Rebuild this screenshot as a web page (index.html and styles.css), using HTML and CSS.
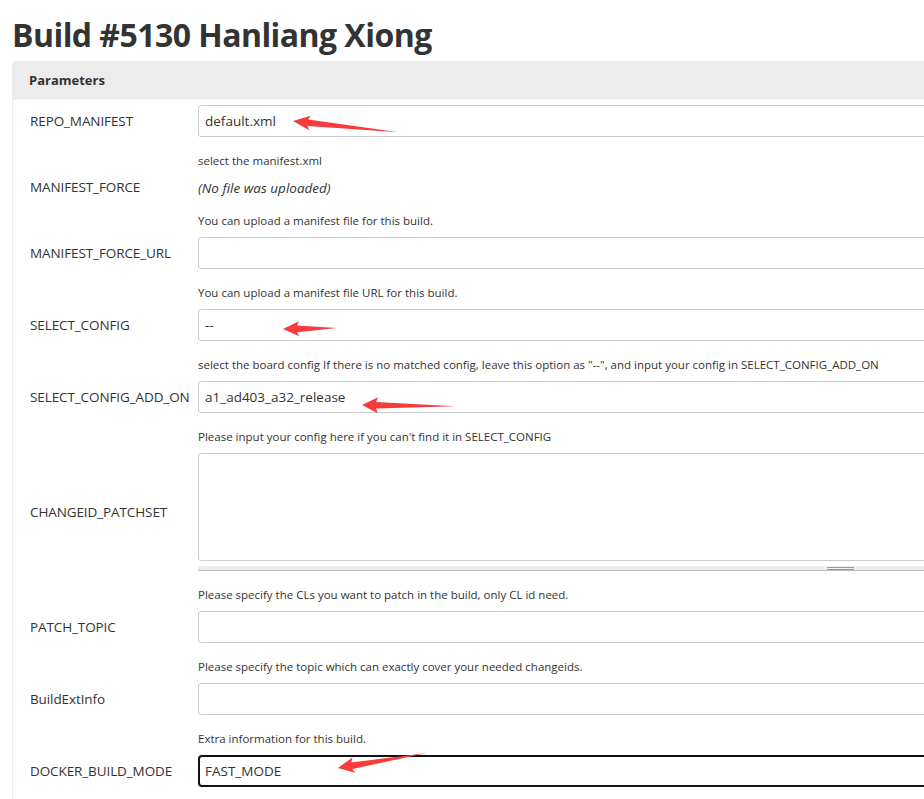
FILE: index.html
```html
<!DOCTYPE html>
<html>
<head>
<meta charset="utf-8">
<link rel="stylesheet" href="styles.css">
</head>
<body>
<h1 class="title">Build #5130 Hanliang Xiong</h1>
<div class="panel">
  <div class="panel-head">Parameters</div>
  <div class="panel-body">
    <div class="param"><div class="label">REPO_MANIFEST</div><div class="field"><div class="input">default.xml</div></div></div>
    <div class="desc">select the manifest.xml</div>

    <div class="param param-file"><div class="label">MANIFEST_FORCE</div><div class="field"><span class="nofile">(No file was uploaded)</span></div></div>
    <div class="desc">You can upload a manifest file for this build.</div>

    <div class="param"><div class="label">MANIFEST_FORCE_URL</div><div class="field"><div class="input"></div></div></div>
    <div class="desc">You can upload a manifest file URL for this build.</div>

    <div class="param"><div class="label">SELECT_CONFIG</div><div class="field"><div class="input">--</div></div></div>
    <div class="desc">select the board config If there is no matched config, leave this option as "--", and input your config in SELECT_CONFIG_ADD_ON</div>

    <div class="param"><div class="label">SELECT_CONFIG_ADD_ON</div><div class="field"><div class="input">a1_ad403_a32_release</div></div></div>
    <div class="desc">Please input your config here if you can't find it in SELECT_CONFIG</div>

    <div class="param"><div class="label">CHANGEID_PATCHSET</div><div class="field"><div class="textarea"></div><div class="resizer"><span class="grip"></span></div></div></div>
    <div class="desc">Please specify the CLs you want to patch in the build, only CL id need.</div>

    <div class="param"><div class="label">PATCH_TOPIC</div><div class="field"><div class="input"></div></div></div>
    <div class="desc">Please specify the topic which can exactly cover your needed changeids.</div>

    <div class="param"><div class="label">BuildExtInfo</div><div class="field"><div class="input"></div></div></div>
    <div class="desc">Extra information for this build.</div>

    <div class="param"><div class="label">DOCKER_BUILD_MODE</div><div class="field"><div class="input input-focus">FAST_MODE</div></div></div>
  </div>
</div>
<svg class="arrows" width="924" height="799" viewBox="0 0 924 799">
  <g fill="#f53b3b">
    <polygon transform="translate(293,121) rotate(6)" points="0,0 17,-7 15,-3 106,0.2 15,3.4 17,7.5"/>
    <polygon transform="translate(283,329) rotate(-1)" points="0,0 16,-7.5 14,-3.2 54,0 14,3.4 16,7.5"/>
    <polygon transform="translate(362,405) rotate(0.6)" points="0,0 16,-8 14,-3.2 93,0.3 14,3.4 16,8"/>
    <polygon transform="translate(338,768) rotate(-9.6)" points="0,0 16,-8 14,-3.2 90,0 14,3.4 16,7.5"/>
  </g>
</svg>
</body>
</html>
```

FILE: styles.css
```css
html, body {
  margin: 0;
  padding: 0;
  overflow: hidden;
  background: #fff;
}
body {
  position: relative;
  width: 924px;
  height: 799px;
  font-family: "Open Sans", "Noto Sans", sans-serif;
  color: #333;
}
.title {
  margin: 0;
  padding: 14px 0 0 12px;
  height: 61px;
  box-sizing: border-box;
  font-size: 32px;
  line-height: 42px;
  font-weight: 700;
  letter-spacing: -0.55px;
  color: #333;
  white-space: nowrap;
}
.panel {
  margin-left: 12px;
  width: 1500px;
  border: 1px solid #ececec;
  border-radius: 4px;
  background: #fff;
}
.panel-head {
  height: 37px;
  line-height: 37px;
  background: #ececec;
  border-bottom: 1px solid #f4f4f4;
  padding-left: 16px;
  font-size: 13px;
  font-weight: 700;
  color: #333;
  border-radius: 3px 3px 0 0;
}
.panel-body {
  padding: 5px 0 20px 17px;
}
.param {
  display: flex;
  align-items: center;
}
.param-file {
  height: 20px;
}
.label {
  width: 168px;
  flex: none;
  font-size: 13.5px;
  letter-spacing: -0.1px;
  color: #333;
}
.field {
  width: 1285px;
  flex: none;
}
.input {
  box-sizing: border-box;
  height: 32px;
  border: 1px solid #ccc;
  border-radius: 3px;
  padding: 0 6px;
  font-size: 13.5px;
  line-height: 30px;
  color: #333;
  background: #fff;
}
.input-focus {
  border: 2px solid #111;
  border-radius: 4px;
  padding: 0 5px;
  line-height: 28px;
}
.nofile {
  font-style: italic;
  font-size: 13.5px;
  color: #333;
}
.textarea {
  box-sizing: border-box;
  height: 108px;
  border: 1px solid #ccc;
  border-radius: 3px;
  background: #fff;
}
.resizer {
  margin-top: 5px;
  height: 4px;
  background: #eee;
  border-bottom: 1px solid #bbb;
  display: flex;
  justify-content: center;
  align-items: center;
}
.grip {
  width: 27px;
  height: 1px;
  border-top: 1px solid #999;
  border-bottom: 1px solid #999;
}
.desc {
  margin-left: 168px;
  padding: 16px 0 8px;
  height: 16px;
  line-height: 16px;
  font-size: 11.5px;
  color: #333;
  white-space: nowrap;
}
.arrows {
  position: absolute;
  left: 0;
  top: 0;
  pointer-events: none;
}
```
